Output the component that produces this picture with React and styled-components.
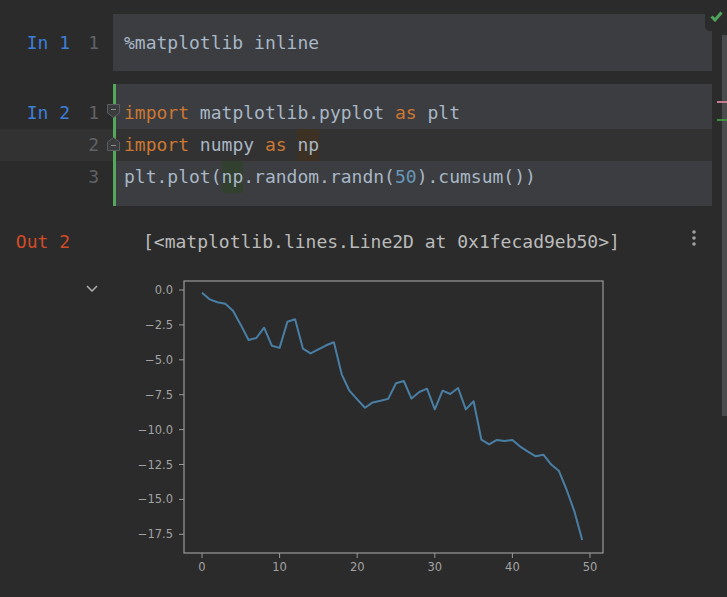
import React from "react";
import styled, { createGlobalStyle } from "styled-components";

const GlobalStyle = createGlobalStyle`
    html, body {
        margin: 0;
        padding: 0;
        background: #2b2b2b;
    }
`;

const CELL_BG = "#3b3d40";
const ACTIVE_BG = "#323232";

const Page = styled.div`
    display: flex;
    width: 727px;
    height: 597px;
    overflow: hidden;
    position: relative;
    background: #2b2b2b;
    font-family: "DejaVu Sans Mono", "Liberation Mono", monospace;
    font-size: 18px;
`;

const Notebook = styled.div`
    width: 712px;
    padding-top: 14px;
    display: flex;
    flex-direction: column;
`;

const Cell = styled.div`
    display: flex;
    flex-direction: column;
    margin-bottom: 13px;
`;

const Line = styled.div`
    display: grid;
    grid-template-columns: 70px 29px 14px 1fr;
    height: ${p => p.$h || 32}px;
    line-height: ${p => p.$h || 32}px;
    background: ${p => (p.$active ? ACTIVE_BG : "transparent")};
`;

const Prompt = styled.span`
    text-align: right;
    color: ${p => (p.$out ? "#d24b28" : "#3d7fd9")};
    white-space: pre;
`;

const LineNo = styled.span`
    text-align: right;
    color: #606366;
`;

const FoldGutter = styled.span`
    display: flex;
    align-items: center;
    position: relative;
    z-index: 1;
    overflow: visible;
    svg {
        flex-shrink: 0;
        margin-left: 8px;
        margin-top: ${p => (p.$up ? "-3px" : "-4px")};
    }
`;

const Code = styled.div`
    padding-left: 8px;
    border-left: 3px solid ${p => (p.$bar ? "#55a85b" : "transparent")};
    background: ${p => (p.$active ? ACTIVE_BG : CELL_BG)};
    color: #a9b7c6;
    white-space: pre;
`;

const Kw = styled.span`
    color: #cc7832;
`;

const Num = styled.span`
    color: #6897bb;
`;

const Mark = styled.span`
    display: inline-block;
    background: ${p => (p.$kind === "write" ? "#3d3124" : "#32402f")};
`;

const OutRow = styled.div`
    display: grid;
    grid-template-columns: 70px 29px 14px 1fr;
    height: 32px;
    line-height: 32px;
    margin-top: 7px;
`;

const OutText = styled.div`
    display: flex;
    justify-content: space-between;
    padding-left: 30px;
    padding-right: 16px;
    color: #bbbbbb;
    white-space: pre;
`;

const Dots = styled.svg`
    margin-top: 4px;
`;

const PlotRow = styled.div`
    display: grid;
    grid-template-columns: 70px 29px 14px 1fr;
    margin-top: 17px;
`;

const Chevron = styled.svg`
    justify-self: end;
    margin-top: 10px;
    margin-right: 1px;
`;

const PlotBox = styled.div`
    padding-left: 22px;
`;

const Track = styled.div`
    width: 15px;
    position: relative;
`;

const Thumb = styled.div`
    margin-left: 10px;
    margin-top: 35px;
    width: 5px;
    height: 381px;
    background: #4a4b4d;
`;

const Marker = styled.div`
    position: absolute;
    left: 5px;
    top: ${p => p.$top}px;
    width: 10px;
    height: 2px;
    background: ${p => p.$color};
`;

const Badge = styled.div`
    position: absolute;
    top: 0;
    right: 0;
    width: 22px;
    height: 31px;
    background: #2b2b2b;
    border-bottom-left-radius: 5px;
    display: flex;
    justify-content: center;
    padding-top: 11px;
    box-sizing: border-box;
`;

function FoldMark({ up }) {
    return (
        <svg width="13" height="14" viewBox="0 0 13 14">
            {up ? (
                <path d="M0.5 13.5 H12.5 V5 L6.5 0.5 L0.5 5 Z" fill="#3a3c3e" stroke="#5b5e61" />
            ) : (
                <path d="M0.5 0.5 H12.5 V9 L6.5 13.5 L0.5 9 Z" fill="#3a3c3e" stroke="#5b5e61" />
            )}
            <line x1="4" x2="9" y1={up ? 8.5 : 5.5} y2={up ? 8.5 : 5.5} stroke="#8a8d90" />
        </svg>
    );
}

const data = [
    -0.19, -0.67, -0.88, -0.98, -1.48, -2.5, -3.58, -3.44, -2.7, -3.99,
    -4.15, -2.27, -2.1, -4.2, -4.54, -4.25, -3.96, -3.75, -6.04, -7.21,
    -7.83, -8.43, -8.05, -7.94, -7.8, -6.68, -6.52, -7.78, -7.31, -7.07,
    -8.55, -7.21, -7.45, -7.02, -8.55, -7.97, -10.72, -11.05, -10.74, -10.82,
    -10.74, -11.22, -11.58, -11.91, -11.8, -12.51, -12.97, -14.33, -15.88, -17.9,
];

const px = i => 67 + i * 7.76;
const py = v => 15 - v * 13.96;

function Chart() {
    const points = data.map((v, i) => `${px(i).toFixed(1)},${py(v).toFixed(1)}`).join(" ");
    const yTicks = [0, -2.5, -5, -7.5, -10, -12.5, -15, -17.5];
    const xTicks = [0, 10, 20, 30, 40, 50];
    return (
        <svg width="480" height="305" viewBox="0 0 480 305">
            <g fontFamily="'DejaVu Sans', sans-serif" fontSize="11.5" fill="#a3a3a3">
                {yTicks.map(t => (
                    <g key={t}>
                        <line x1="44" x2="49" y1={py(t)} y2={py(t)} stroke="#999" />
                        <text x="38" y={py(t) + 4} textAnchor="end">
                            {t === 0 ? "0.0" : "\u2212" + Math.abs(t).toFixed(1)}
                        </text>
                    </g>
                ))}
                {xTicks.map(t => (
                    <g key={t}>
                        <line x1={px(t)} x2={px(t)} y1="278" y2="283" stroke="#999" />
                        <text x={px(t)} y="296" textAnchor="middle">{t}</text>
                    </g>
                ))}
            </g>
            <rect x="49" y="6" width="419" height="272" fill="none" stroke="#999" strokeWidth="1.2" />
            <polyline points={points} fill="none" stroke="#4a7fa5" strokeWidth="2" strokeLinejoin="round" />
        </svg>
    );
}

export default function App() {
    return (
        <Page>
            <GlobalStyle />
            <Notebook>
                <Cell>
                    <Line $h={13}><span /><span /><span /><Code /></Line>
                    <Line>
                        <Prompt>In 1</Prompt>
                        <LineNo>1</LineNo>
                        <FoldGutter />
                        <Code>%matplotlib inline</Code>
                    </Line>
                    <Line $h={12}><span /><span /><span /><Code /></Line>
                </Cell>

                <Cell>
                    <Line $h={13}><span /><span /><span /><Code $bar /></Line>
                    <Line>
                        <Prompt>In 2</Prompt>
                        <LineNo>1</LineNo>
                        <FoldGutter><FoldMark /></FoldGutter>
                        <Code $bar><Kw>import</Kw>{" matplotlib.pyplot "}<Kw>as</Kw>{" plt"}</Code>
                    </Line>
                    <Line $active>
                        <span />
                        <LineNo>2</LineNo>
                        <FoldGutter $up><FoldMark up /></FoldGutter>
                        <Code $bar $active><Kw>import</Kw>{" numpy "}<Kw>as</Kw>{" "}<Mark $kind="write">np</Mark></Code>
                    </Line>
                    <Line>
                        <span />
                        <LineNo>3</LineNo>
                        <FoldGutter />
                        <Code $bar>plt.plot(<Mark>np</Mark>.random.randn(<Num>50</Num>).cumsum())</Code>
                    </Line>
                    <Line $h={13}><span /><span /><span /><Code $bar /></Line>
                </Cell>

                <OutRow>
                    <Prompt $out>Out 2</Prompt>
                    <span />
                    <span />
                    <OutText>
                        <span>[&lt;matplotlib.lines.Line2D at 0x1fecad9eb50&gt;]</span>
                        <Dots width="4" height="16" viewBox="0 0 4 16">
                            <circle cx="2" cy="2" r="1.8" fill="#a0a0a0" />
                            <circle cx="2" cy="8" r="1.8" fill="#a0a0a0" />
                            <circle cx="2" cy="14" r="1.8" fill="#a0a0a0" />
                        </Dots>
                    </OutText>
                </OutRow>

                <PlotRow>
                    <span />
                    <Chevron width="12" height="7" viewBox="0 0 12 7">
                        <path d="M1 1 L6 6 L11 1" fill="none" stroke="#b0b0b0" strokeWidth="1.5" />
                    </Chevron>
                    <span />
                    <PlotBox>
                        <Chart />
                    </PlotBox>
                </PlotRow>
            </Notebook>

            <Track>
                <Thumb />
                <Marker $top={101} $color="#c27d8f" />
                <Marker $top={119} $color="#3f8f3f" />
            </Track>

            <Badge>
                <svg width="13" height="11" viewBox="0 0 13 11">
                    <path d="M1.5 5.5 L5 9 L11.5 1.5" fill="none" stroke="#4fa35a" strokeWidth="3" />
                </svg>
            </Badge>
        </Page>
    );
}
